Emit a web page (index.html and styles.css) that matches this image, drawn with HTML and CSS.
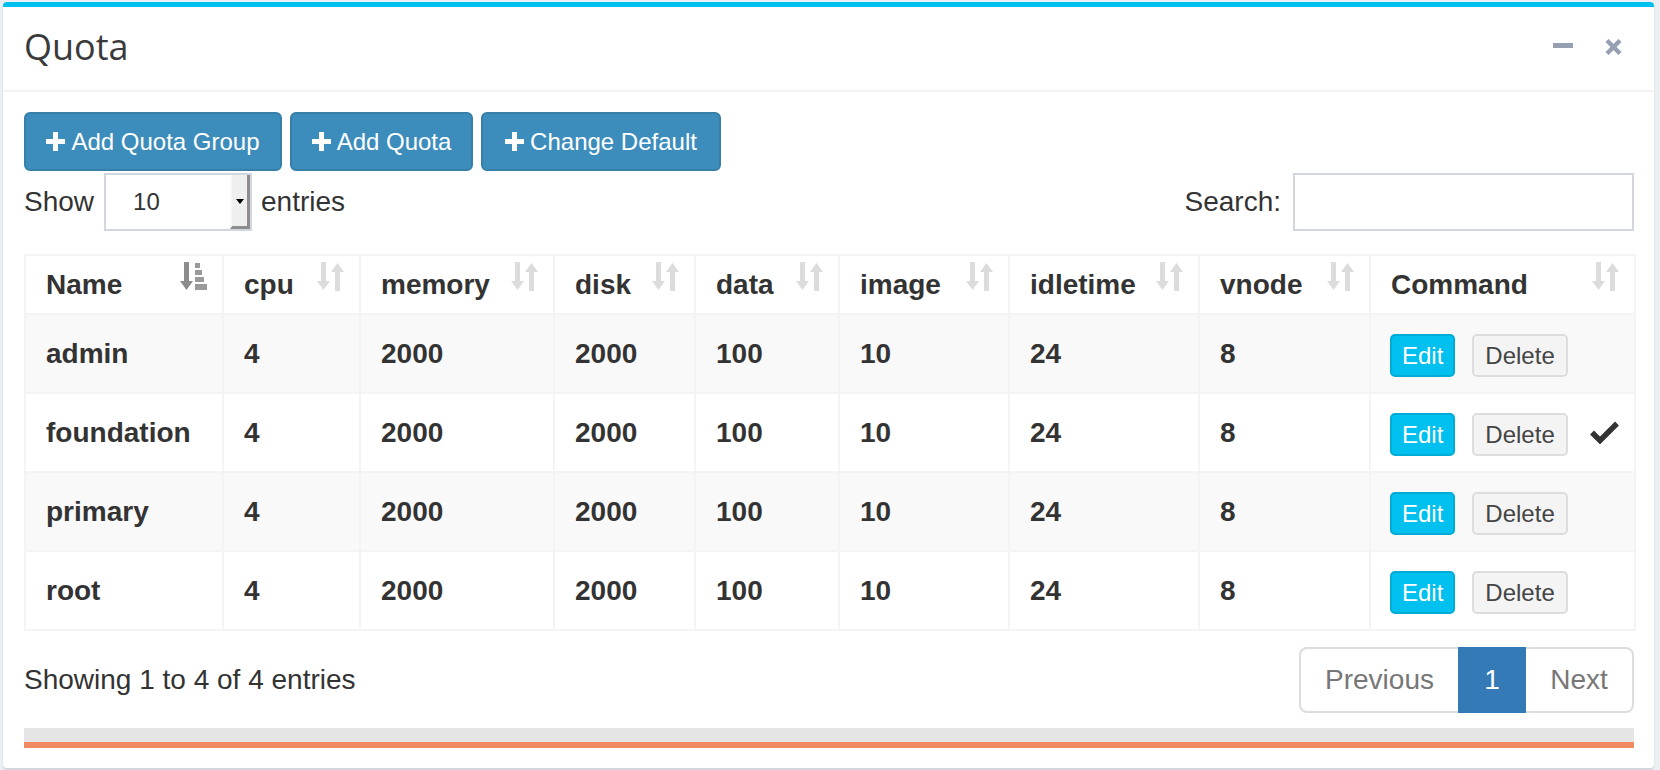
FILE: index.html
```html
<!DOCTYPE html>
<html lang="en">
<head>
<meta charset="utf-8">
<title>Quota</title>
<link rel="stylesheet" href="styles.css">
</head>
<body>
<div class="page">
  <div class="box">
    <div class="box-header">
      <h3 class="box-title">Quota</h3>
      <div class="box-tools">
        <span class="tool-min"></span>
        <svg class="tool-close" width="17" height="16" viewBox="0 0 17 16"><path d="M2 1.5 L15 14.5 M15 1.5 L2 14.5" stroke="#97a0b3" stroke-width="4.4" fill="none"/></svg>
      </div>
    </div>
    <div class="box-body">
      <div class="toolbar">
        <button class="btn btn-primary btn-group-add"><svg class="plus" width="19" height="19" viewBox="0 0 19 19"><path d="M7 0h5v7h7v5h-7v7h-5v-7h-7v-5h7z" fill="#fff"/></svg><span>Add Quota Group</span></button>
        <button class="btn btn-primary btn-quota-add"><svg class="plus" width="19" height="19" viewBox="0 0 19 19"><path d="M7 0h5v7h7v5h-7v7h-5v-7h-7v-5h7z" fill="#fff"/></svg><span>Add Quota</span></button>
        <button class="btn btn-primary btn-default-change"><svg class="plus" width="19" height="19" viewBox="0 0 19 19"><path d="M7 0h5v7h7v5h-7v7h-5v-7h-7v-5h7z" fill="#fff"/></svg><span>Change Default</span></button>
      </div>
      <div class="dt-top">
        <div class="dt-length">
          <span>Show</span>
          <span class="select"><span class="select-value">10</span><span class="select-arrow"><span class="tri"></span></span></span>
          <span>entries</span>
        </div>
        <div class="dt-search">
          <span>Search:</span>
          <span class="search-input"></span>
        </div>
      </div>
      <table class="grid">
        <colgroup>
          <col style="width:198px"><col style="width:137px"><col style="width:194px"><col style="width:141px"><col style="width:144px"><col style="width:170px"><col style="width:190px"><col style="width:171px"><col style="width:265px">
        </colgroup>
        <thead>
          <tr>
            <th>Name<svg class="sort-icon" width="27" height="30" viewBox="0 0 27 30"><rect x="4" y="0" width="5" height="21" fill="#8c8c8c"/><path d="M0 19h13l-6.5 9z" fill="#8c8c8c"/><rect x="15" y="1" width="5" height="5" fill="#9a9a9a"/><rect x="15" y="8" width="7" height="5" fill="#9a9a9a"/><rect x="15" y="15" width="9" height="5" fill="#9a9a9a"/><rect x="15" y="22" width="12" height="6" fill="#9a9a9a"/></svg></th>
            <th>cpu<svg class="sort-icon" width="27" height="30" viewBox="0 0 27 30"><rect x="4" y="0" width="5" height="21" fill="#dcdcdc"/><path d="M0 19h13l-6.5 9z" fill="#dcdcdc"/><path d="M14 10h13l-6.5-9z" fill="#dcdcdc"/><rect x="18" y="8" width="5" height="21" fill="#dcdcdc"/></svg></th>
            <th>memory<svg class="sort-icon" width="27" height="30" viewBox="0 0 27 30"><rect x="4" y="0" width="5" height="21" fill="#dcdcdc"/><path d="M0 19h13l-6.5 9z" fill="#dcdcdc"/><path d="M14 10h13l-6.5-9z" fill="#dcdcdc"/><rect x="18" y="8" width="5" height="21" fill="#dcdcdc"/></svg></th>
            <th>disk<svg class="sort-icon" width="27" height="30" viewBox="0 0 27 30"><rect x="4" y="0" width="5" height="21" fill="#dcdcdc"/><path d="M0 19h13l-6.5 9z" fill="#dcdcdc"/><path d="M14 10h13l-6.5-9z" fill="#dcdcdc"/><rect x="18" y="8" width="5" height="21" fill="#dcdcdc"/></svg></th>
            <th>data<svg class="sort-icon" width="27" height="30" viewBox="0 0 27 30"><rect x="4" y="0" width="5" height="21" fill="#dcdcdc"/><path d="M0 19h13l-6.5 9z" fill="#dcdcdc"/><path d="M14 10h13l-6.5-9z" fill="#dcdcdc"/><rect x="18" y="8" width="5" height="21" fill="#dcdcdc"/></svg></th>
            <th>image<svg class="sort-icon" width="27" height="30" viewBox="0 0 27 30"><rect x="4" y="0" width="5" height="21" fill="#dcdcdc"/><path d="M0 19h13l-6.5 9z" fill="#dcdcdc"/><path d="M14 10h13l-6.5-9z" fill="#dcdcdc"/><rect x="18" y="8" width="5" height="21" fill="#dcdcdc"/></svg></th>
            <th>idletime<svg class="sort-icon" width="27" height="30" viewBox="0 0 27 30"><rect x="4" y="0" width="5" height="21" fill="#dcdcdc"/><path d="M0 19h13l-6.5 9z" fill="#dcdcdc"/><path d="M14 10h13l-6.5-9z" fill="#dcdcdc"/><rect x="18" y="8" width="5" height="21" fill="#dcdcdc"/></svg></th>
            <th>vnode<svg class="sort-icon" width="27" height="30" viewBox="0 0 27 30"><rect x="4" y="0" width="5" height="21" fill="#dcdcdc"/><path d="M0 19h13l-6.5 9z" fill="#dcdcdc"/><path d="M14 10h13l-6.5-9z" fill="#dcdcdc"/><rect x="18" y="8" width="5" height="21" fill="#dcdcdc"/></svg></th>
            <th>Command<svg class="sort-icon" width="27" height="30" viewBox="0 0 27 30"><rect x="4" y="0" width="5" height="21" fill="#dcdcdc"/><path d="M0 19h13l-6.5 9z" fill="#dcdcdc"/><path d="M14 10h13l-6.5-9z" fill="#dcdcdc"/><rect x="18" y="8" width="5" height="21" fill="#dcdcdc"/></svg></th>
          </tr>
        </thead>
        <tbody>
          <tr>
            <td>admin</td><td>4</td><td>2000</td><td>2000</td><td>100</td><td>10</td><td>24</td><td>8</td>
            <td><div class="cmd"><button class="btn-xs btn-info">Edit</button><button class="btn-xs btn-default">Delete</button></div></td>
          </tr>
          <tr>
            <td>foundation</td><td>4</td><td>2000</td><td>2000</td><td>100</td><td>10</td><td>24</td><td>8</td>
            <td><div class="cmd"><button class="btn-xs btn-info">Edit</button><button class="btn-xs btn-default">Delete</button><svg class="check" width="29" height="23" viewBox="0 0 29 23"><path d="M2 11.5 L10 19.5 L27 2.5" stroke="#333" stroke-width="5.5" fill="none"/></svg></div></td>
          </tr>
          <tr>
            <td>primary</td><td>4</td><td>2000</td><td>2000</td><td>100</td><td>10</td><td>24</td><td>8</td>
            <td><div class="cmd"><button class="btn-xs btn-info">Edit</button><button class="btn-xs btn-default">Delete</button></div></td>
          </tr>
          <tr>
            <td>root</td><td>4</td><td>2000</td><td>2000</td><td>100</td><td>10</td><td>24</td><td>8</td>
            <td><div class="cmd"><button class="btn-xs btn-info">Edit</button><button class="btn-xs btn-default">Delete</button></div></td>
          </tr>
        </tbody>
      </table>
      <div class="dt-bottom">
        <div class="dt-info">Showing 1 to 4 of 4 entries</div>
        <div class="pagination">
          <span class="page-item prev">Previous</span>
          <span class="page-item active">1</span>
          <span class="page-item next">Next</span>
        </div>
      </div>
      <div class="hbar"></div>
    </div>
  </div>
</div>
</body>
</html>
```
FILE: styles.css
```css
* { box-sizing: border-box; }
html, body { margin: 0; padding: 0; }
body {
  background: #ecf0f5;
  font-family: "Liberation Sans", Arial, sans-serif;
  color: #333;
  width: 1660px;
  height: 770px;
  overflow: hidden;
}
.page { padding: 2px 6px 0 3px; }
.box {
  background: #fff;
  border-top: 5px solid #00c0ef;
  border-radius: 4px;
  box-shadow: 0 2px 2px rgba(0, 0, 0, 0.12);
}
.box-header {
  height: 85px;
  border-bottom: 2px solid #f4f4f4;
  display: flex;
  align-items: center;
  justify-content: space-between;
  padding: 0 32px 4px 21px;
}
.box-title {
  margin: 0;
  font-family: "Open Sans", "Noto Sans", sans-serif;
  font-weight: normal;
  font-size: 36px;
  line-height: 1;
  color: #3a3a3a;
}
.box-tools { display: flex; align-items: center; gap: 32px; }
.tool-min { display: block; width: 20px; height: 5px; background: #97a0b3; margin-top: -2px; }
.tool-close { display: block; }

.box-body { padding: 20px 20px 20px 21px; }
.toolbar { display: flex; gap: 8px; }
.btn {
  font-family: "Liberation Sans", Arial, sans-serif;
  height: 59px;
  border-radius: 6px;
  font-size: 24px;
  display: flex;
  align-items: center;
  justify-content: center;
  gap: 6px;
  padding: 0;
  cursor: pointer;
}
.btn-group-add { width: 258px; }
.btn-quota-add { width: 183px; }
.btn-default-change { width: 240px; }
.btn-primary { background: #3c8dbc; border: 2px solid #367fa9; color: #fff; }
.plus { display: block; margin-top: -1px; }

.dt-top {
  margin-top: 2px;
  height: 58px;
  display: flex;
  justify-content: space-between;
  align-items: center;
  font-size: 28px;
}
.dt-length, .dt-search { display: flex; align-items: center; height: 58px; }
.select {
  margin: 0 9px 0 10px;
  width: 148px;
  height: 58px;
  border: 2px solid #d2d6de;
  display: flex;
  background: #fff;
}
.select-value {
  flex: 1;
  font-size: 24px;
  padding-left: 27px;
  display: flex;
  align-items: center;
  color: #333;
}
.select-arrow {
  width: 20px;
  background: #efefef;
  border-right: 3px solid #8d8d8d;
  border-bottom: 3px solid #8d8d8d;
  border-left: 2px solid #fafafa;
  display: flex;
  align-items: center;
  justify-content: center;
}
.tri {
  width: 0; height: 0;
  border-left: 4px solid transparent;
  border-right: 4px solid transparent;
  border-top: 5px solid #000;
  margin-top: 2px;
}
.search-input {
  margin-left: 12px;
  width: 341px;
  height: 58px;
  border: 2px solid #d2d6de;
  background: #fff;
}

.grid {
  margin-top: 23px;
  width: 1610px;
  table-layout: fixed;
  border-collapse: collapse;
  border: 2px solid #f4f4f4;
}
.grid th, .grid td {
  border: 2px solid #f4f4f4;
  padding: 0 14px 0 20px;
  text-align: left;
  font-size: 28px;
  font-weight: bold;
  color: #333;
  white-space: nowrap;
}
.grid th { position: relative; }
.grid thead tr { height: 59px; }
.grid tbody tr { height: 79px; }
.grid tbody tr:nth-child(odd) { background: #f9f9f9; }
.sort-icon { position: absolute; top: 6px; right: 15px; }

.cmd { display: flex; align-items: center; margin-left: -1px; margin-top: 4px; }
.btn-xs {
  font-family: "Liberation Sans", Arial, sans-serif;
  height: 43px;
  font-size: 24px;
  padding: 0 10px;
  border-radius: 5px;
  cursor: pointer;
}
.btn-info { background: #00c0ef; border: 2px solid #00acd6; color: #fff; }
.btn-default { background: #f4f4f4; border: 2px solid #ddd; color: #444; margin-left: 17px; padding: 0 11px; }
.check { display: block; margin-left: 22px; margin-top: -4px; }

.dt-bottom {
  margin-top: 16px;
  display: flex;
  justify-content: space-between;
  align-items: center;
}
.dt-info { font-size: 28px; color: #333; }
.pagination { display: flex; height: 66px; }
.page-item {
  display: flex;
  align-items: center;
  justify-content: center;
  font-size: 28px;
  color: #777;
  border: 2px solid #ddd;
  background: #fff;
}
.prev { width: 159px; border-radius: 8px 0 0 8px; border-right: none; }
.active { width: 68px; background: #337ab7; border-color: #337ab7; color: #fff; }
.next { width: 108px; border-radius: 0 8px 8px 0; border-left: none; }
.hbar {
  margin-top: 15px;
  height: 20px;
  background: #e5e5e5;
  border-bottom: 6px solid #ef8a62;
}
```
